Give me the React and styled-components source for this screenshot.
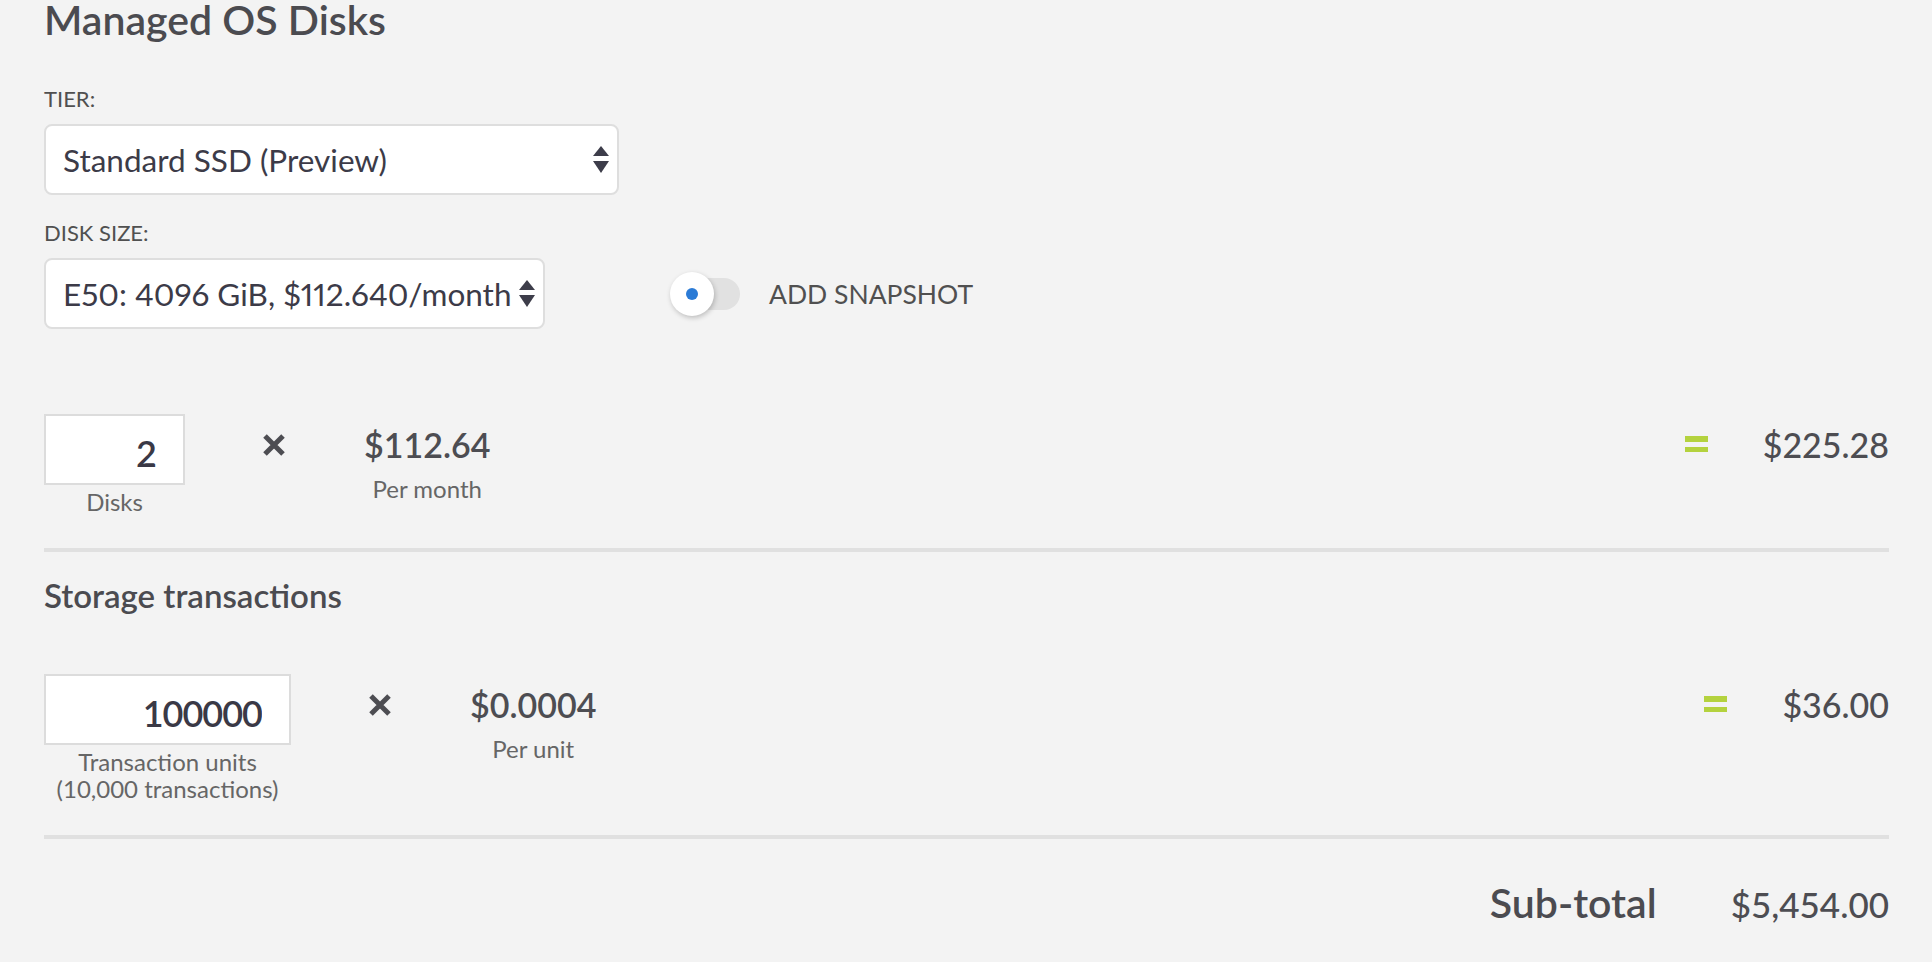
import React from "react";
import styled, { createGlobalStyle } from "styled-components";

const GlobalStyle = createGlobalStyle`
    body {
        margin: 0;
        background: #f3f3f3;
        font-family: Lato, "Open Sans", sans-serif;
        color: #4d4d52;
    }
`

const Page = styled.div`
    padding: 0 43px 40px 44px;
    display: flex;
    flex-direction: column;
`

const Title = styled.h2`
    margin: 0;
    font-size: 41px;
    line-height: 40px;
    font-weight: 600;
    color: #4b4b50;
`

const Field = styled.div`
    display: flex;
    flex-direction: column;
    align-items: flex-start;
    margin-top: ${props => props.$top}px;
`

const Label = styled.label`
    font-size: 22px;
    line-height: 26px;
    color: #505050;
    text-transform: uppercase;
    margin-bottom: 12px;
`

// select column is fixed so the snapshot switch keeps its place
const Inline = styled.div`
    display: grid;
    grid-template-columns: 626px auto auto;
    align-items: center;
    justify-items: start;
`

const Select = styled.div`
    box-sizing: border-box;
    display: flex;
    align-items: center;
    gap: 8px;
    width: ${props => props.$width ? props.$width + "px" : "auto"};
    height: 71px;
    padding: 0 8px 0 17px;
    background: #fff;
    border: 2px solid #dedede;
    border-radius: 8px;
    font-size: 31.5px;
    font-variant-numeric: proportional-nums;
    color: #3c3b48;
    cursor: pointer;
`

const SelectText = styled.span`
    flex: 1;
    white-space: nowrap;
`

const Toggle = styled.div`
    position: relative;
    width: 70px;
    height: 44px;
`

const Track = styled.span`
    position: absolute;
    left: 8px;
    right: 0;
    top: 6px;
    height: 32px;
    border-radius: 16px;
    background: #e1e1e1;
`

const Knob = styled.span`
    position: absolute;
    left: 0;
    top: 0;
    width: 44px;
    height: 44px;
    border-radius: 50%;
    background: #fff;
    box-shadow: 1px 2px 5px rgba(0, 0, 0, 0.22);
    display: flex;
    align-items: center;
    justify-content: center;

    &::after {
        content: "";
        width: 12px;
        height: 12px;
        border-radius: 50%;
        background: #2b7bd6;
    }
`

const ToggleLabel = styled.span`
    margin-left: 29px;
    font-size: 26.5px;
    color: #505050;
`

const CalcRow = styled.div`
    display: flex;
    align-items: flex-start;
    margin-top: ${props => props.$top}px;
`

const InputBlock = styled.div`
    display: flex;
    flex-direction: column;
    align-items: center;
`

const NumberInput = styled.input`
    box-sizing: border-box;
    width: ${props => props.$width}px;
    height: 71px;
    padding: 6px 27px 0 10px;
    border: 2px solid #dcdcdc;
    border-radius: 0;
    background: #fff;
    text-align: right;
    font-family: Lato, "Open Sans", sans-serif;
    font-size: 36px;
    font-weight: 600;
    letter-spacing: -1px;
    color: #3a3946;
    outline: none;
`

const Caption = styled.div`
    margin-top: ${props => props.$top || 0}px;
    font-size: 24px;
    line-height: 27px;
    color: #666;
    text-align: center;
`

const Times = styled.svg`
    width: 24px;
    height: 22px;
    margin: 20px 78px 0 77px;
    flex-shrink: 0;
`

const PriceBlock = styled.div`
    display: flex;
    flex-direction: column;
    align-items: center;
    margin-top: 11px;
`

const Price = styled.div`
    font-size: 34px;
    line-height: 40px;
    font-weight: 600;
    color: #4d4d52;
`

const Spacer = styled.div`
    flex: 1;
`

const Equals = styled.span`
    box-sizing: border-box;
    width: 23px;
    height: 16px;
    margin: 22px 55px 0 0;
    border-top: 6px solid #b4d23e;
    border-bottom: 5px solid #b4d23e;
`

const Amount = styled.div`
    margin-top: 11px;
    font-size: 34px;
    line-height: 40px;
    font-weight: 500;
    color: #4d4d52;
`

const Divider = styled.hr`
    width: 100%;
    height: 4px;
    margin: 33px 0 0;
    border: none;
    background: #e0e0e0;
`

const SectionTitle = styled.h3`
    margin: 25px 0 0;
    font-size: 33px;
    line-height: 36px;
    font-weight: 600;
    color: #4b4b50;
`

const TotalRow = styled.div`
    display: flex;
    justify-content: flex-end;
    align-items: baseline;
    gap: 74px;
    margin-top: 40px;
`

const TotalLabel = styled.span`
    font-size: 41px;
    line-height: 48px;
    font-weight: 600;
    color: #4b4b50;
`

const TotalAmount = styled.span`
    font-size: 35px;
    font-weight: 500;
    color: #4d4d52;
`

function Arrows() {
    return (
        <svg width="16" height="28" viewBox="0 0 16 28">
            <polygon points="8,0 16,10 0,10" fill="#3d3d4a"/>
            <polygon points="0,15 16,15 8,27" fill="#3d3d4a"/>
        </svg>
    )
}

function TimesIcon() {
    return (
        <Times viewBox="0 0 24 22">
            <path d="M3 2 L21 20 M21 2 L3 20" stroke="#4d4d52" strokeWidth="5"/>
        </Times>
    )
}

function Dropdown({width, children}) {
    return (
        <Select $width={width}>
            <SelectText>{children}</SelectText>
            <Arrows/>
        </Select>
    )
}

function CostLine({top, value, width, captions, price, unit, total}) {
    return (
        <CalcRow $top={top}>
            <InputBlock>
                <NumberInput $width={width} defaultValue={value}/>
                <Caption $top={3}>
                    {captions.map(c => <div key={c}>{c}</div>)}
                </Caption>
            </InputBlock>
            <TimesIcon/>
            <PriceBlock>
                <Price>{price}</Price>
                <Caption $top={10}>{unit}</Caption>
            </PriceBlock>
            <Spacer/>
            <Equals/>
            <Amount>{total}</Amount>
        </CalcRow>
    )
}

function App() {
    return (
        <Page>
            <GlobalStyle/>
            <Title>Managed OS Disks</Title>

            <Field $top={46}>
                <Label>Tier:</Label>
                <Dropdown width={575}>Standard SSD (Preview)</Dropdown>
            </Field>

            <Field $top={25}>
                <Label>Disk size:</Label>
                <Inline>
                    <Dropdown>E50: 4096 GiB, $112.640/month</Dropdown>
                    <Toggle>
                        <Track/>
                        <Knob/>
                    </Toggle>
                    <ToggleLabel>ADD SNAPSHOT</ToggleLabel>
                </Inline>
            </Field>

            <CostLine
                top={85}
                value="2"
                width={141}
                captions={["Disks"]}
                price="$112.64"
                unit="Per month"
                total="$225.28"
            />
            <Divider/>

            <SectionTitle>Storage transactions</SectionTitle>
            <CostLine
                top={61}
                value="100000"
                width={247}
                captions={["Transaction units", "(10,000 transactions)"]}
                price="$0.0004"
                unit="Per unit"
                total="$36.00"
            />
            <Divider/>

            <TotalRow>
                <TotalLabel>Sub-total</TotalLabel>
                <TotalAmount>$5,454.00</TotalAmount>
            </TotalRow>
        </Page>
    )
}

export default App;
